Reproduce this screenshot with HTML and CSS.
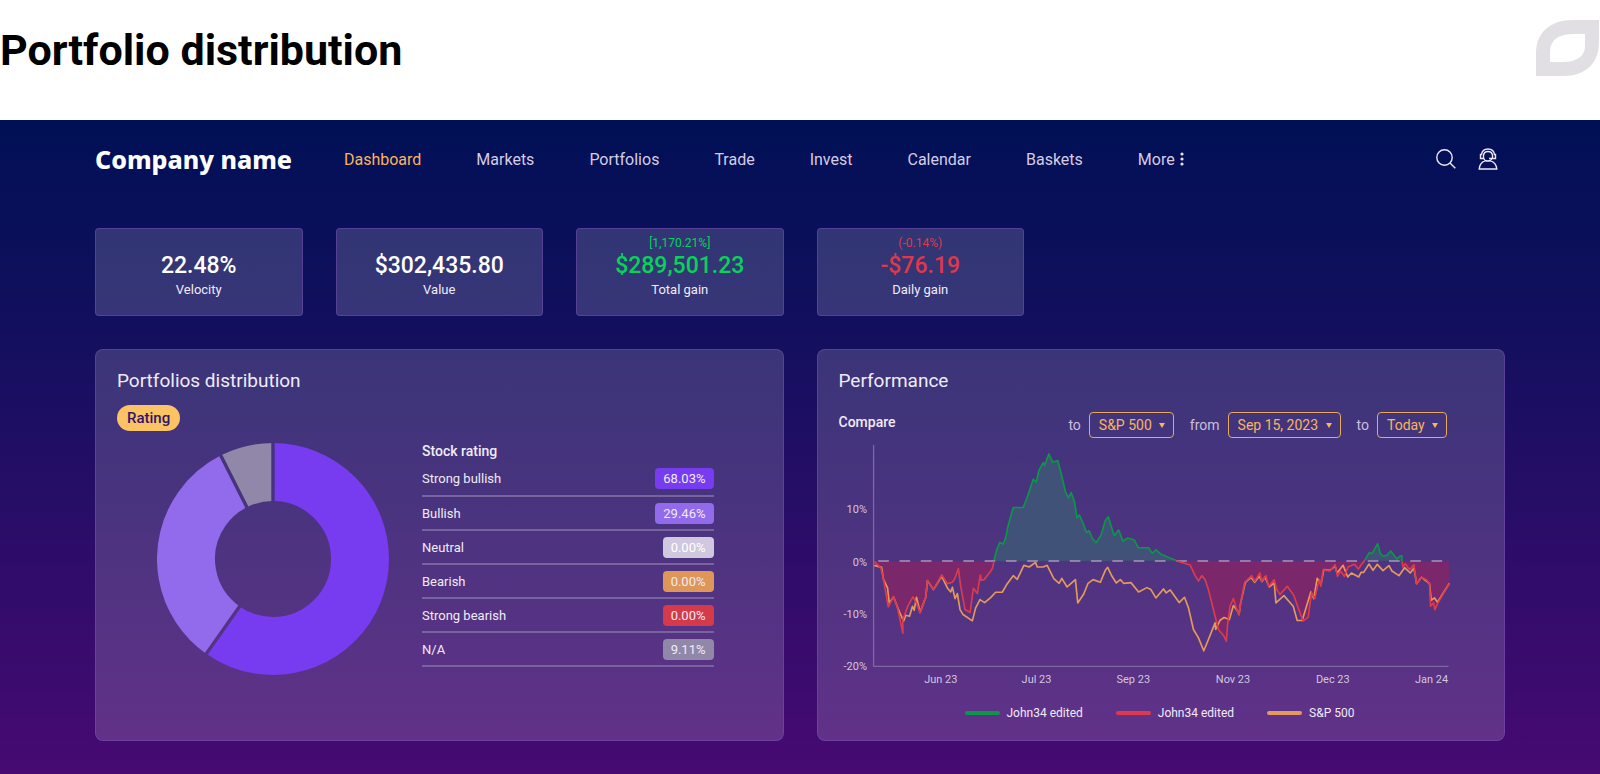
FILE: index.html
```html
<!DOCTYPE html>
<html lang="en">
<head>
<meta charset="utf-8">
<title>Portfolio distribution</title>
<link rel="stylesheet" href="styles.css">
</head>
<body>
<header class="page-head">
  <h1>Portfolio distribution</h1>
  <svg class="brand" viewBox="0 0 64 56" aria-hidden="true"><path fill="#e1dfe4" fill-rule="evenodd" d="M0 56V34C0 13 13 0 38 0H63V22C63 43 50 56 27 56ZM14 42H27C41 42 49 36 49 26V14H38C22 14 14 20 14 32Z"/></svg>
</header>
<main class="app">
  <div class="topbar">
    <div class="company">Company name</div>
    <nav class="nav">
      <a class="active" href="#">Dashboard</a>
      <a href="#">Markets</a>
      <a href="#">Portfolios</a>
      <a href="#">Trade</a>
      <a href="#">Invest</a>
      <a href="#">Calendar</a>
      <a href="#">Baskets</a>
      <a class="more" href="#">More<svg class="dots" viewBox="0 0 4 14" aria-hidden="true"><circle cx="2" cy="2" r="1.6"/><circle cx="2" cy="7" r="1.6"/><circle cx="2" cy="12" r="1.6"/></svg></a>
    </nav>
    <div class="tools">
      <button type="button" aria-label="Search"><svg viewBox="0 0 20 22"><circle cx="8.500" cy="9.500" r="7.700"/><path d="M14 15L19.300 20.300"/></svg></button>
      <button type="button" aria-label="Account"><svg viewBox="0 0 20 22"><path d="M5.500 10.500H2.500V6.500H3.500C4 3 6.500 1 10 1S16 3 16.500 6.500H17.500V10.500H14.500V7C14 4.500 12.500 3.500 10 3.500S6 4.500 5.500 7V10.500M11 10.500H14.500M7 12.500C5.500 11 5 9.500 5.500 7.500M14 10.500C13.500 11.500 13 12 12.500 12.500C10.500 13.200 9 13.200 7 12.500M7 12.800C3.500 14 1.500 17 1.200 21H18.800C18.500 17 16.500 14 12.500 12.800"/></svg></button>
    </div>
  </div>
  <div class="board">
    <section class="stat"><div class="delta"></div><div class="amount">22.48%</div><div class="label">Velocity</div></section>
    <section class="stat"><div class="delta"></div><div class="amount">$302,435.80</div><div class="label">Value</div></section>
    <section class="stat up"><div class="delta">[1,170.21%]</div><div class="amount">$289,501.23</div><div class="label">Total gain</div></section>
    <section class="stat down"><div class="delta">(-0.14%)</div><div class="amount">-$76.19</div><div class="label">Daily gain</div></section>

    <section class="panel">
      <h2>Portfolios distribution</h2>
      <button type="button" class="pill">Rating</button>
      <div class="distribution">
        <svg class="donut" viewBox="-116 -116 232 232" role="img" aria-label="Ratings share">
          <mask id="gaps" maskUnits="userSpaceOnUse" x="-116" y="-116" width="232" height="232">
            <rect x="-116" y="-116" width="232" height="232" fill="#fff"/>
            <path d="M0 0V-120M0 0L-69 98M0 0L-54 -107" stroke="#000" stroke-width="3.400"/>
          </mask>
          <g fill="none" stroke-width="58" mask="url(#gaps)">
            <circle r="87" pathLength="360" stroke="#773bf0" stroke-dasharray="215.200 144.800" transform="rotate(-90)"/>
            <circle r="87" pathLength="360" stroke="#926aec" stroke-dasharray="118.200 241.800" transform="rotate(125.200)"/>
            <circle r="87" pathLength="360" stroke="#9188a9" stroke-dasharray="26.600 333.400" transform="rotate(243.400)"/>
          </g>
        </svg>
        <table class="ratings">
          <caption>Stock rating</caption>
          <tbody>
            <tr><th scope="row">Strong bullish</th><td><span class="badge violet">68.03%</span></td></tr>
            <tr><th scope="row">Bullish</th><td><span class="badge lilac">29.46%</span></td></tr>
            <tr><th scope="row">Neutral</th><td><span class="badge pale">0.00%</span></td></tr>
            <tr><th scope="row">Bearish</th><td><span class="badge orange">0.00%</span></td></tr>
            <tr><th scope="row">Strong bearish</th><td><span class="badge red">0.00%</span></td></tr>
            <tr><th scope="row">N/A</th><td><span class="badge gray">9.11%</span></td></tr>
          </tbody>
        </table>
      </div>
    </section>

    <section class="panel performance">
      <h2>Performance</h2>
      <div class="controls">
        <h3>Compare</h3>
        <div class="filters">
          <label for="index">to</label><span class="pick"><select id="index"><option>S&amp;P 500</option></select></span>
          <label for="from">from</label><span class="pick"><select id="from"><option>Sep 15, 2023</option></select></span>
          <label for="until">to</label><span class="pick"><select id="until"><option>Today</option></select></span>
        </div>
      </div>
      <svg class="chart" viewBox="0 0 613 254" role="img" aria-label="Performance chart">
        <g transform="translate(-8 -5) scale(.33333)">
          <g fill="#7a276b">
            <path d="M130 395L150 415L158 450L172 532L188 502L200 535L216 611V570L232 528L246 502L257 520L268 550L285 503L290 453L308 480L333 436L350 462L365 458L373 445L383 417L390 470L403 540L418 549L428 476L440 492L449 436L452 452L460 450L478 428L486 415L490 395Z"/>
            <path transform="translate(960)" d="M78 393L100 400L120 406L135 438L145 454L155 438L165 450L175 480L190 540L205 600L222 620L229 635L232 590L240 530L250 507L262 545L267 555L272 520L284 458L305 438L314 455L330 430L335 455L348 438L356 470L373 450L380 478L390 495L412 470L432 498L446 538L460 575L475 563L485 490L495 507L503 470L509 450L513 470L520 420L540 424L556 405L563 440L572 425L584 440L595 412L614 404L626 418L637 402L645 395Z"/>
            <path transform="translate(960)" d="M757 395L760 412L767 402L780 420L793 405L801 462L816 443L830 450L840 462L843 530L852 520L856 540L864 522L880 495L900 461V395Z"/>
          </g>
          <path class="axis" d="M128 45V711H1857"/>
          <g class="gain">
            <path d="M490 395L492 385L500 355L508 338L518 343L525 325L532 290L548 233H578L592 197L608 148L617 157L625 122L638 98L642 107L655 72L667 97L682 92L692 130L705 185L714 204L722 188L732 215L740 264L747 256L760 285L768 308L776 303L786 326L797 339L812 316L825 272L834 261L842 288L852 318L865 301L878 334L892 325L912 331L924 354H955L966 371L977 360L990 372L1010 381L1040 393"/>
            <path d="M1605 392L1619 368L1627 372L1644 342L1652 372L1660 379L1672 377L1683 364L1702 388L1710 380L1717 378V395"/>
          </g>
          <path class="zero" d="M142 394H1860"/>
          <g class="line orange-line">
            <path d="M130 407L152 413L158 450L170 475L175 520L188 502L205 545L218 575L225 557L236 560L245 530L250 542L257 503L268 548L285 503L290 453L308 480L333 440L350 475L360 487L365 473L373 507L380 492L388 540L397 555L425 574L435 535L448 510L462 519L480 504L495 488H515L530 462L548 438L560 449L580 407L596 412L615 398L620 412H638L650 407L670 447L686 461L694 446L710 472L735 450L742 520L760 493L773 461L788 450L810 458L825 422L832 413L845 440L858 460L870 450L880 461L902 459L925 487L950 474L962 480L977 505L1000 478L1008 490L1020 481L1047 519L1063 503L1075 535L1090 600L1105 625L1121 664L1135 630L1155 580L1157 600L1170 572L1182 564L1198 570L1210 528L1223 545L1227 555L1232 520L1246 458L1263 443L1274 458L1288 440L1296 456L1305 442L1318 472L1333 460L1338 520L1362 498L1390 530L1402 573H1417L1430 530L1443 487L1452 507L1462 446L1474 462L1482 420L1500 422L1516 410L1522 430L1540 407L1554 442L1565 430L1587 442L1594 428H1602L1618 403L1630 422L1643 404L1660 423L1678 408L1687 424L1708 438L1725 414L1742 430L1753 415L1761 462L1776 443L1800 462L1805 512L1815 505L1824 518L1840 492L1860 461"/>
          </g>
          <g class="line red-line">
            <path d="M130 395L150 415L158 450L172 532L188 502L200 535L216 611V570L232 528L246 502L257 520L268 550L285 503L290 453L308 480L333 436L350 462L365 458L373 445L383 417L390 470L403 540L418 549L428 476L440 492L449 436L452 452L460 450L478 428L486 415L490 395"/>
            <path transform="translate(960)" d="M78 393L100 400L120 406L135 438L145 454L155 438L165 450L175 480L190 540L205 600L222 620L229 635L232 590L240 530L250 507L262 545L267 555L272 520L284 458L305 438L314 455L330 430L335 455L348 438L356 470L373 450L380 478L390 495L412 470L432 498L446 538L460 575L475 563L485 490L495 507L503 470L509 450L513 470L520 420L540 424L556 405L563 440L572 425L584 440L595 412L614 404L626 418L637 402L645 392M757 395L760 412L767 402L780 420L793 405L801 462L816 443L830 450L840 462L843 530L852 520L856 540L864 522L880 495L900 461"/>
          </g>
        </g>
        <g class="ticks" text-anchor="end">
          <text x="28" y="78">10%</text><text x="28" y="131">0%</text><text x="28" y="183">-10%</text><text x="28" y="236">-20%</text>
        </g>
        <g class="ticks" text-anchor="middle">
          <text x="102" y="249">Jun 23</text><text x="198" y="249">Jul 23</text><text x="295" y="249">Sep 23</text><text x="395" y="249">Nov 23</text><text x="495" y="249">Dec 23</text><text x="594" y="249">Jan 24</text>
        </g>
      </svg>
      <ul class="legend">
        <li class="green-key">John34 edited</li>
        <li class="red-key">John34 edited</li>
        <li class="orange-key">S&amp;P 500</li>
      </ul>
    </section>
  </div>
</main>
</body>
</html>
```
FILE: styles.css
```css
* { box-sizing: border-box; }
body { margin: 0; background: #fff; color: #f0ebf7; font-family: Roboto, "Noto Sans", sans-serif; font-size: 13px; }
h1, h2, h3, ul { margin: 0; padding: 0; }
button, select { font: inherit; margin: 0; }

.page-head { display: flex; justify-content: space-between; align-items: flex-start; height: 120px; padding: 20px 0 0; }
.page-head h1 { color: #000; font-size: 43px; line-height: 60px; font-weight: 700; }
.brand { width: 64px; height: 56px; }

.app { min-height: calc(100vh - 120px); padding: 0 95px 32px; background: linear-gradient(#001055, #140f5f 34%, #470a73); }
.topbar { display: flex; align-items: center; height: 78px; }
.company { color: #fff; font-family: "Noto Sans", sans-serif; font-size: 25px; font-weight: 800; margin-right: 52px; white-space: nowrap; }
.nav { display: flex; gap: 55px; font-size: 16px; }
.nav a { color: #d5cce3; text-decoration: none; }
.nav .active { color: #f9b45c; }
.nav .more { display: flex; align-items: center; gap: 5px; }
.dots { width: 4px; height: 14px; fill: #e5dff0; }
.tools { display: flex; gap: 22px; margin-left: auto; padding-right: 7px; }
.tools button { display: flex; padding: 0; border: 0; background: none; }
.tools svg { width: 20px; height: 22px; fill: none; stroke: #eee8f6; stroke-width: 1.400; }

.board { display: grid; grid-template-columns: repeat(6, 1fr); gap: 33px; padding-top: 30px; }
.stat, .panel { background: rgba(255, 255, 255, .16); border: 1px solid rgba(128, 82, 190, .45); }
.stat { height: 88px; padding-top: 6px; border-radius: 4px; text-align: center; }
.delta { height: 16px; font-size: 12px; line-height: 16px; }
.amount { color: #fff; font-size: 23px; line-height: 30px; font-weight: 500; }
.label { line-height: 18px; }
.up .delta, .up .amount { color: #08d25a; }
.down .delta, .down .amount { color: #de394b; }

.panel { grid-column: span 3; min-height: 392px; padding: 16px 21px; border-radius: 8px; }
.panel h2 { font-size: 19px; line-height: 29px; font-weight: 400; }
.pill { display: block; height: 26px; margin-top: 10px; padding: 0 10px; border: 0; border-radius: 13px; background: #fbc363; color: #331368; font-size: 15px; font-weight: 500; }
.distribution { display: flex; gap: 33px; margin-top: 12px; padding: 0 48px 0 40px; }
.donut { flex: none; width: 232px; height: 232px; }
.ratings { flex: 1; border-collapse: collapse; align-self: flex-start; }
.ratings caption { height: 19px; font-size: 14px; line-height: 16px; font-weight: 500; text-align: left; }
.ratings th, .ratings td { height: 34px; padding: 0; border-bottom: 2px solid #79639f; font-weight: 400; text-align: left; }
.ratings td { text-align: right; }
.badge { display: inline-block; padding: 0 8px; border-radius: 4px; line-height: 21px; }
.violet { background: #773bf0; }
.lilac { background: #926aec; }
.pale { background: #cfc8de; color: #fff; }
.orange { background: #de9659; }
.red { background: #d53a4b; }
.gray { background: #9188a9; }

.performance { padding-right: 54px; }
.controls { display: flex; justify-content: space-between; margin-top: 17px; padding-right: 3px; }
.controls h3 { font-size: 14px; line-height: 20px; font-weight: 500; }
.filters { display: flex; align-items: center; color: #cbbfdc; font-size: 14px; }
.pick { position: relative; margin: 0 16px 0 8px; }
.pick:last-child { margin-right: 0; }
.pick::after { content: ""; position: absolute; right: 9px; top: 11px; border: 3px solid transparent; border-top: 5px solid #f9b45c; border-bottom: 0; pointer-events: none; }
.pick select { display: block; appearance: none; height: 26px; padding: 0 21px 0 9px; border: 1px solid #eba75b; border-radius: 4px; background: transparent; color: #f9b45c; }
.chart { display: block; width: 100%; margin-top: -3px; }
.axis { fill: none; stroke: #7d68a4; stroke-width: 4; }
.zero { fill: none; stroke: #a996b5; stroke-width: 4; stroke-dasharray: 32 32; }
.gain path { fill: #405278; stroke: #0c9648; stroke-width: 5; stroke-linejoin: round; }
.line { fill: none; stroke-width: 5; stroke-linejoin: round; }
.orange-line { stroke: #e49a5b; }
.red-line { stroke: #dc3b4b; }
.ticks { fill: #d0c7df; font-size: 11px; }
.legend { display: flex; gap: 33px; margin-top: 16px; padding-left: 126px; list-style: none; font-size: 12px; }
.legend li { display: flex; align-items: center; gap: 7px; line-height: 18px; }
.legend li::before { content: ""; width: 35px; height: 4px; border-radius: 2px; }
.green-key::before { background: #0c9648; }
.red-key::before { background: #dc3b4b; }
.orange-key::before { background: #e49a5b; }
```
